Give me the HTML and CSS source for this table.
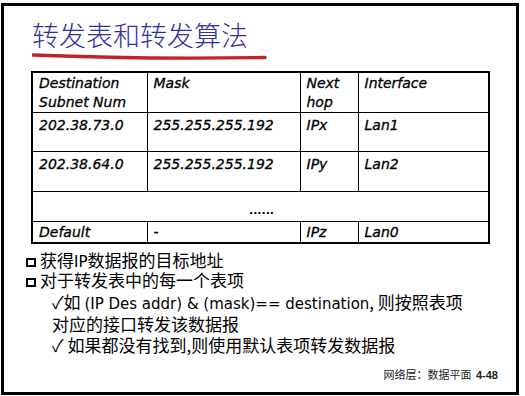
FILE: index.html
```html
<!DOCTYPE html>
<html lang="zh">
<head>
<meta charset="utf-8">
<link rel="stylesheet" href="styles.css">
</head>
<body>
<div class="slide">
  <h1 class="title">转发表和转发算法</h1>
  <svg class="underline" width="240" height="9" viewBox="0 0 240 9"><path d="M1 3 Q 110 7.5 233 5.5" stroke="#c3212b" stroke-width="3.4" fill="none" stroke-linecap="round"/></svg>
  <table class="ftable">
    <colgroup><col class="c1"><col class="c2"><col class="c3"><col class="c4"></colgroup>
    <tr class="r-head"><td>Destination<br>Subnet Num</td><td>Mask</td><td>Next<br>hop</td><td>Interface</td></tr>
    <tr class="r-a"><td>202.38.73.0</td><td>255.255.255.192</td><td>IPx</td><td>Lan1</td></tr>
    <tr class="r-b"><td>202.38.64.0</td><td>255.255.255.192</td><td>IPy</td><td>Lan2</td></tr>
    <tr class="r-dots"><td colspan="4">......</td></tr>
    <tr class="r-def"><td>Default</td><td>-</td><td>IPz</td><td>Lan0</td></tr>
  </table>
  <ul class="points">
    <li class="top"><span class="box"></span>获得<span class="lat">IP</span>数据报的目标地址</li>
    <li class="top"><span class="box"></span>对于转发表中的每一个表项</li>
    <li class="sub first">✓如 <span class="lat">(IP Des addr) &amp; (mask)== destination</span>, 则按照表项</li>
    <li class="sub">对应的接口转发该数据报</li>
    <li class="sub">✓ 如果都没有找到,则使用默认表项转发数据报</li>
  </ul>
  <div class="footer">网络层：数据平面 <b>4-48</b></div>
</div>
</body>
</html>
```
FILE: styles.css
```css
html, body { margin: 0; padding: 0; background: #fff; }
body { width: 525px; height: 396px; overflow: hidden; }
.slide {
  margin: 3px 0 0 1px;
  width: 518px;
  height: 392px;
  box-sizing: border-box;
  border: 3px solid #000;
  padding: 13px 0 0 0;
  display: flex;
  flex-direction: column;
  position: relative;
}
.title {
  margin: 0 0 0 28px;
  font-family: "Noto Sans CJK SC", sans-serif;
  font-weight: 300;
  font-size: 27px;
  line-height: 32px;
  color: #30309a;
}
.underline { display: block; margin: 1px 0 0 28px; }
.ftable {
  margin: 10px 0 0 27px;
  width: 459px;
  border-collapse: collapse;
  border: 2px solid #000;
  font-family: "DejaVu Sans", sans-serif;
  font-style: italic;
  font-size: 14px;
  line-height: 19px;
  color: #000;
  -webkit-text-stroke: 0.3px #000;
  table-layout: fixed;
}
.c1 { width: 115px; }
.c2 { width: 153px; }
.c3 { width: 58px; }
.c4 { width: 131px; }
.ftable td {
  border: 1px solid #000;
  padding: 1px 4px 0 6px;
  vertical-align: top;
  white-space: nowrap;
}
.r-head td { height: 40px; box-sizing: border-box; }
.r-a td { height: 39px; box-sizing: border-box; padding-top: 3px; }
.r-b td { height: 40px; box-sizing: border-box; padding-top: 3px; }
.r-dots td { height: 30px; box-sizing: border-box; text-align: center; padding-top: 9px; font-style: normal; font-weight: bold; font-size: 11px; -webkit-text-stroke: 0; }
.r-def td { height: 21px; box-sizing: border-box; padding-top: 1px; }
.points {
  list-style: none;
  margin: 6px 0 0 0;
  padding: 0;
  font-family: "Noto Sans CJK SC", sans-serif;
  font-size: 17px;
  color: #000;
}
.points .lat { font-family: "DejaVu Sans", sans-serif; font-size: 15px; line-height: 1; }
.top { line-height: 19px; padding-left: 22px; }
.sub { line-height: 21.5px; padding-left: 48px; }
.sub.first { margin-top: 2px; }
.box {
  display: inline-block;
  width: 10px;
  height: 9px;
  box-sizing: border-box;
  border: 2.5px solid #000;
  margin-right: 4px;
  vertical-align: 0;
}
.footer {
  margin: auto 18px 10px 0;
  align-self: flex-end;
  font-family: "Noto Sans CJK SC", sans-serif;
  font-size: 11px;
  line-height: 14px;
  color: #222;
}
.footer b { font-family: "Liberation Sans", sans-serif; font-weight: bold; font-size: 11px; margin-left: 2px; }
```
